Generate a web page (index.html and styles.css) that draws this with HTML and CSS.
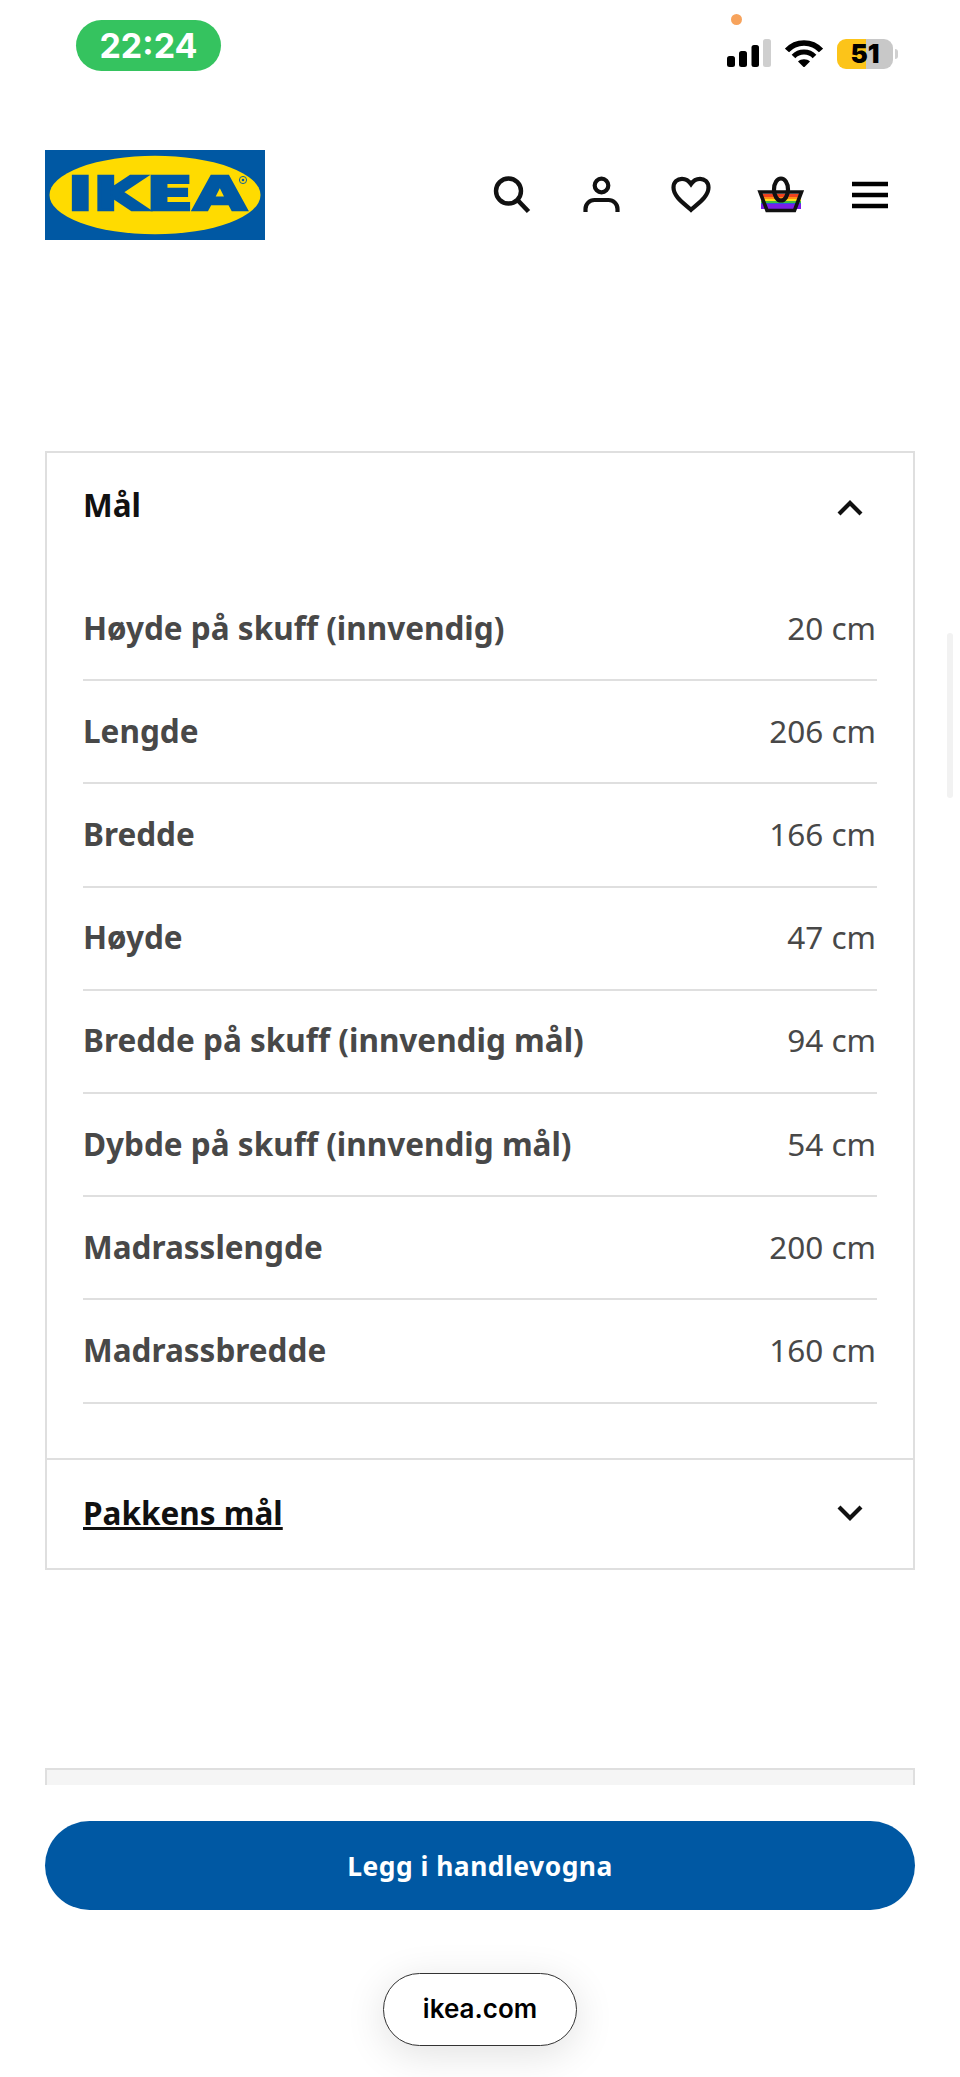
FILE: index.html
```html
<!DOCTYPE html>
<html lang="no">
<head>
<meta charset="utf-8">
<title>IKEA – Mål</title>
<link rel="stylesheet" href="styles.css">
</head>
<body>
<div class="page">
  <div class="status">
    <div class="time">22:24</div>
    <div class="status-icons">
      <span class="mic-dot"></span>
      <svg class="signal" width="44" height="28" viewBox="0 0 44 28"><rect x="0" y="17" width="8" height="11" rx="2.5" fill="#000"/><rect x="12" y="12" width="8" height="16" rx="2.5" fill="#000"/><rect x="24.500" y="6" width="7.500" height="22" rx="2.500" fill="#000"/><rect x="36" y="0" width="8" height="28" rx="2.500" fill="#cfcfcf"/></svg>
      <svg class="wifi" width="38" height="28" viewBox="0 0 38 28"><path d="M2 11.500C11 1.500 27 1.500 36 11.500" fill="none" stroke="#000" stroke-width="5.500"/><path d="M8.500 17.500C14 11.500 24 11.500 29.500 17.500" fill="none" stroke="#000" stroke-width="5"/><path d="M13 22.500C16 19.500 22 19.500 25 22.500L19 28.500Z" fill="#000"/></svg>
      <div class="battery"><span class="battery-level">51</span><span class="battery-nub"></span></div>
    </div>
  </div>

  <header class="site-header">
    <svg class="logo" width="220" height="90" viewBox="0 0 220 90" role="img" aria-label="IKEA">
      <rect width="220" height="90" fill="#0058a3"/>
      <ellipse cx="110" cy="45" rx="105.500" ry="39.300" fill="#ffdb00"/>
      <text class="logo-text" x="22.500" y="60" textLength="179" lengthAdjust="spacingAndGlyphs">IKEA</text>
      <circle cx="198" cy="30" r="3.600" fill="#ffdb00" stroke="#0058a3" stroke-width="0.900"/>
      <circle cx="198" cy="30" r="1.300" fill="#0058a3"/>
    </svg>
    <nav class="nav-icons">
      <svg width="48" height="48" viewBox="0 0 48 48"><circle cx="20.500" cy="20" r="12.500" fill="none" stroke="#111" stroke-width="4.400"/><path d="M29.500 29L40.500 40.500" stroke="#111" stroke-width="4.600" fill="none"/></svg>
      <svg width="48" height="48" viewBox="0 0 48 48"><circle cx="23.500" cy="14.500" r="6.800" fill="none" stroke="#111" stroke-width="4.200"/><path d="M7.500 41v-3a9 9 0 0 1 9-9h14a9 9 0 0 1 9 9v3" fill="none" stroke="#111" stroke-width="4.200"/></svg>
      <svg width="48" height="48" viewBox="0 0 48 48"><path d="M24 38.800C18 33 6.500 26 6.500 16.500C6.500 11 10.500 7.800 15 7.800C19 7.800 22 10 24 13C26 10 29 7.800 33 7.800C37.500 7.800 41.500 11 41.500 16.500C41.500 26 30 33 24 38.800Z" fill="none" stroke="#111" stroke-width="4.200"/></svg>
      <svg width="48" height="48" viewBox="0 0 48 48">
        <rect x="4" y="23" width="40" height="3" fill="#f0431f"/>
        <rect x="4" y="26" width="40" height="2" fill="#ff8f14"/>
        <rect x="4" y="28" width="40" height="2" fill="#ffe01a"/>
        <rect x="4" y="30" width="40" height="2" fill="#3fbf3f"/>
        <rect x="4" y="32" width="40" height="1" fill="#2f55e0"/>
        <rect x="4" y="33" width="40" height="5" fill="#7a1fe6"/>
        <path d="M3 21H44.500L37.500 39.500H10Z" fill="none" stroke="#111" stroke-width="3.600"/>
        <ellipse cx="24" cy="18.500" rx="7" ry="11" fill="none" stroke="#111" stroke-width="4.200"/>
      </svg>
      <svg width="48" height="48" viewBox="0 0 48 48"><path d="M6 13h36M6 24h36M6 35h36" stroke="#000" stroke-width="4.600" fill="none"/></svg>
    </nav>
  </header>

  <main class="content">
    <section class="accordion">
      <div class="panel">
        <div class="panel-head">
          <h2 class="panel-title">Mål</h2>
          <svg class="chevron chevron-up" width="28" height="18" viewBox="0 0 28 18"><path d="M3 15L14 4L25 15" fill="none" stroke="#111" stroke-width="4.200"/></svg>
        </div>
        <div class="measures">
          <div class="row"><span class="row-name">Høyde på skuff (innvendig)</span><span class="row-value">20 cm</span></div>
          <div class="row"><span class="row-name">Lengde</span><span class="row-value">206 cm</span></div>
          <div class="row"><span class="row-name">Bredde</span><span class="row-value">166 cm</span></div>
          <div class="row"><span class="row-name">Høyde</span><span class="row-value">47 cm</span></div>
          <div class="row"><span class="row-name">Bredde på skuff (innvendig mål)</span><span class="row-value">94 cm</span></div>
          <div class="row"><span class="row-name">Dybde på skuff (innvendig mål)</span><span class="row-value">54 cm</span></div>
          <div class="row"><span class="row-name">Madrasslengde</span><span class="row-value">200 cm</span></div>
          <div class="row"><span class="row-name">Madrassbredde</span><span class="row-value">160 cm</span></div>
        </div>
      </div>
      <div class="panel-closed">
        <a class="panel-link">Pakkens mål</a>
        <svg class="chevron" width="28" height="18" viewBox="0 0 28 18"><path d="M3 3L14 14L25 3" fill="none" stroke="#111" stroke-width="4.200"/></svg>
      </div>
    </section>
    <div class="next-box"></div>
  </main>

  <span class="scroll-thumb"></span>

  <div class="buy-bar">
    <button class="buy-button">Legg i handlevogna</button>
    <div class="url-pill">ikea.com</div>
  </div>
</div>
</body>
</html>
```

FILE: styles.css
```css
* { box-sizing: border-box; }
html, body { margin: 0; padding: 0; background: #fff; }
.page {
  position: relative;
  width: 960px;
  height: 2077px;
  overflow: hidden;
  background: #fff;
  font-family: "Noto Sans", sans-serif;
}

/* status bar */
.status {
  display: flex;
  justify-content: space-between;
  align-items: flex-start;
  height: 150px;
  padding: 20px 62px 0 76px;
}
.time {
  width: 145px;
  height: 51px;
  border-radius: 26px;
  background: #35c35f;
  color: #fff;
  font: 700 34px/51px Inter, sans-serif;
  text-align: center;
}
.status-icons {
  position: relative;
  display: flex;
  align-items: flex-start;
  gap: 14px;
  margin-top: 19px;
}
.mic-dot {
  position: absolute;
  left: 4px;
  top: -25px;
  width: 11px;
  height: 11px;
  border-radius: 50%;
  background: #f7a35c;
}
.battery {
  position: relative;
  width: 56px;
  height: 30px;
  margin-right: 5px;
  border-radius: 9px;
  background: linear-gradient(90deg, #fcc419 0 29px, #c8c8c8 29px);
}
.battery-level {
  display: block;
  color: #000;
  font: 900 26px/30px Inter, sans-serif;
  text-align: center;
}
.battery-nub {
  position: absolute;
  right: -5px;
  top: 10px;
  width: 3px;
  height: 10px;
  border-radius: 0 3px 3px 0;
  background: #d0d0d0;
}

/* header */
.site-header {
  display: flex;
  justify-content: space-between;
  align-items: center;
  height: 90px;
  padding: 0 66px 0 45px;
}
.logo { display: block; }
.logo-text {
  font: 700 46px "DejaVu Sans", sans-serif;
  fill: #0058a3;
  stroke: #0058a3;
  stroke-width: 2.600;
}
.nav-icons {
  display: flex;
  gap: 41.500px;
}

/* accordion */
.content {
  padding: 211px 45px 0;
}
.accordion {
  border: 2px solid #dfdfdf;
}
.panel {
  border-bottom: 2px solid #dfdfdf;
  padding: 0 36px 54px;
}
.panel-head {
  display: flex;
  justify-content: space-between;
  align-items: center;
  height: 125px;
  padding: 0 13px 23px 0;
}
.chevron-up { margin-top: 8px; }
.panel-title {
  margin: 0;
  color: #111;
  font-size: 31.500px;
  font-weight: 700;
}
.row {
  display: flex;
  justify-content: space-between;
  align-items: center;
  height: 103.200px;
  padding-bottom: 3px;
  border-bottom: 2px solid #dfdfdf;
  color: #484848;
  font-size: 31.500px;
}
.row-name { font-weight: 700; }
.row-value { font-weight: 400; padding-right: 1px; }
.panel-closed {
  display: flex;
  justify-content: space-between;
  align-items: center;
  height: 108px;
  padding: 0 49px 2px 36px;
}
.panel-link {
  color: #111;
  font-size: 31.500px;
  font-weight: 700;
  text-decoration: underline;
  text-decoration-thickness: 3px;
}
.next-box {
  height: 60px;
  margin-top: 198px;
  border: 2px solid #dfdfdf;
  background: #f5f5f5;
}

.scroll-thumb {
  position: absolute;
  left: 947px;
  top: 633px;
  width: 6px;
  height: 165px;
  border-radius: 3px;
  background: #f2f2f2;
}

/* sticky buy bar */
.buy-bar {
  position: absolute;
  left: 0;
  right: 0;
  top: 1785px;
  bottom: 0;
  display: flex;
  flex-direction: column;
  align-items: center;
  padding: 36px 45px 0;
  background: #fff;
}
.buy-button {
  width: 100%;
  height: 89px;
  border: 0;
  border-radius: 45px;
  background: #0058a3;
  color: #fff;
  font: 700 26.400px "Noto Sans", sans-serif;
  letter-spacing: 0.5px;
}
.url-pill {
  width: 194px;
  height: 73px;
  margin-top: 63px;
  border: 1.500px solid #333;
  border-radius: 37px;
  background: #fff;
  box-shadow: 0 8px 40px rgba(0, 0, 0, 0.12);
  color: #000;
  font: 600 26px/70px Inter, sans-serif;
  text-align: center;
}
```
